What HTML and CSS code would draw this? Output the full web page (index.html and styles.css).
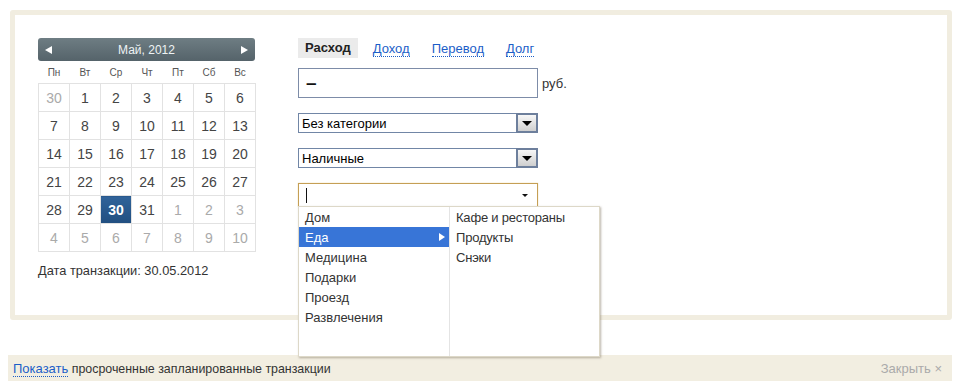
FILE: index.html
```html
<!DOCTYPE html>
<html lang="ru">
<head>
<meta charset="utf-8">
<title>Транзакция</title>
<link rel="stylesheet" href="styles.css">
</head>
<body>
<div class="panel">
  <div class="cal-col">
    <div class="cal-head">
      <svg class="cal-arrow" width="7" height="8" viewBox="0 0 7 8"><polygon points="7,0 7,8 0,4" fill="#fff"/></svg>
      <span class="cal-title">Май, 2012</span>
      <svg class="cal-arrow" width="7" height="8" viewBox="0 0 7 8"><polygon points="0,0 0,8 7,4" fill="#fff"/></svg>
    </div>
    <table class="cal">
      <thead>
        <tr><th>Пн</th><th>Вт</th><th>Ср</th><th>Чт</th><th>Пт</th><th>Сб</th><th>Вс</th></tr>
      </thead>
      <tbody>
        <tr><td class="other">30</td><td>1</td><td>2</td><td>3</td><td>4</td><td>5</td><td>6</td></tr>
        <tr><td>7</td><td>8</td><td>9</td><td>10</td><td>11</td><td>12</td><td>13</td></tr>
        <tr><td>14</td><td>15</td><td>16</td><td>17</td><td>18</td><td>19</td><td>20</td></tr>
        <tr><td>21</td><td>22</td><td>23</td><td>24</td><td>25</td><td>26</td><td>27</td></tr>
        <tr><td>28</td><td>29</td><td class="sel">30</td><td>31</td><td class="other">1</td><td class="other">2</td><td class="other">3</td></tr>
        <tr><td class="other">4</td><td class="other">5</td><td class="other">6</td><td class="other">7</td><td class="other">8</td><td class="other">9</td><td class="other">10</td></tr>
      </tbody>
    </table>
    <div class="cal-date">Дата транзакции: 30.05.2012</div>
  </div>

  <div class="form-col">
    <div class="tabs">
      <span class="tab active">Расход</span>
      <a class="tab link first">Доход</a>
      <a class="tab link">Перевод</a>
      <a class="tab link">Долг</a>
    </div>
    <div class="amount-row">
      <div class="amount"><span class="dash">–</span></div>
      <span class="currency">руб.</span>
    </div>
    <div class="select">
      <span class="select-text">Без категории</span>
      <span class="select-btn"><span class="tri"></span></span>
    </div>
    <div class="select">
      <span class="select-text">Наличные</span>
      <span class="select-btn"><span class="tri"></span></span>
    </div>
    <div class="combo-wrap">
      <div class="combo">
        <span class="caret"></span>
        <span class="combo-tri"></span>
      </div>
      <div class="dropdown">
        <ul class="menu">
          <li>Дом</li>
          <li class="hl">Еда<span class="sub-arrow"></span></li>
          <li>Медицина</li>
          <li>Подарки</li>
          <li>Проезд</li>
          <li>Развлечения</li>
        </ul>
        <ul class="menu sub">
          <li>Кафе и рестораны</li>
          <li>Продукты</li>
          <li>Снэки</li>
        </ul>
      </div>
    </div>
  </div>
</div>

<div class="bar">
  <div class="bar-left"><a class="bar-link">Показать</a><span class="bar-rest"> просроченные запланированные транзакции</span></div>
  <div class="bar-close">Закрыть ×</div>
</div>
</body>
</html>
```

FILE: styles.css
```css
html, body {
  background: #fff;
}
body {
  margin: 8px;
  font-family: "Liberation Sans", Arial, sans-serif;
  font-size: 13px;
  color: #333;
}

.panel {
  box-sizing: border-box;
  margin: 2px 0 0 2px;
  height: 310px;
  border: 5px solid #f1ede0;
  border-radius: 3px;
  padding: 23px 0 0 23px;
  display: flex;
  align-items: flex-start;
}

/* calendar */
.cal-col {
  width: 218px;
  flex: none;
}
.cal-head {
  height: 23px;
  border-radius: 3px;
  background: linear-gradient(#6e7d83, #55636a);
  display: flex;
  align-items: center;
  justify-content: space-between;
  padding: 0 7px 0 7px;
  box-sizing: border-box;
  width: 217px;
}
.cal-title {
  color: #eef3f4;
  font-size: 12px;
}
.cal-arrow {
  display: block;
}
.cal {
  border-collapse: collapse;
  margin: 0;
}
.cal th {
  height: 22px;
  padding: 0;
  font-size: 10px;
  font-weight: normal;
  color: #555;
  text-align: center;
  vertical-align: middle;
}
.cal td {
  width: 30px;
  height: 27px;
  padding: 0;
  border: 1px solid #e2e2e2;
  text-align: center;
  vertical-align: middle;
  font-size: 14px;
  color: #444;
}
.cal td.other {
  color: #aaa;
}
.cal td.sel {
  background: linear-gradient(#30639a, #214f80);
  color: #fff;
  font-weight: bold;
}
.cal-date {
  margin-top: 11px;
  font-size: 12.8px;
  color: #333;
}

/* form */
.form-col {
  margin-left: 42px;
  width: 280px;
  flex: none;
}
.tabs {
  display: flex;
  align-items: center;
  height: 20px;
}
.tab {
  font-size: 13px;
}
.tab.active {
  background: #ebebeb;
  font-weight: bold;
  color: #222;
  padding: 0 7px;
  line-height: 20px;
  height: 20px;
}
.tab.link {
  color: #1c5ec8;
  border-bottom: 1px dotted #1c5ec8;
  line-height: 14px;
  margin-top: 2px;
  margin-left: 22px;
  cursor: pointer;
}
.tab.link.first {
  margin-left: 15px;
}

.amount-row {
  display: flex;
  align-items: center;
  margin-top: 10px;
}
.amount {
  box-sizing: border-box;
  width: 240px;
  height: 30px;
  border: 1px solid #7d8ca8;
  display: flex;
  align-items: center;
  padding-left: 7px;
}
.dash {
  font-weight: bold;
  font-size: 19px;
  color: #111;
}
.currency {
  margin-left: 4px;
  font-size: 13px;
  color: #333;
}

.select {
  box-sizing: border-box;
  width: 240px;
  height: 20px;
  border: 1px solid #7186a6;
  margin-top: 15px;
  display: flex;
  align-items: center;
  padding-left: 3px;
  background: #fff;
}
.select-text {
  flex: 1;
  font-size: 13px;
  color: #000;
}
.select-btn {
  box-sizing: border-box;
  width: 22px;
  height: 20px;
  margin: -1px -1px -1px 0;
  border: 2px solid #6d7f9c;
  background: linear-gradient(#f7f7f7, #cfcfcf);
  display: flex;
  align-items: center;
  justify-content: center;
}
.tri {
  width: 0;
  height: 0;
  border-left: 5px solid transparent;
  border-right: 5px solid transparent;
  border-top: 5px solid #000;
}

.combo-wrap {
  position: relative;
  margin-top: 15px;
}
.combo {
  box-sizing: border-box;
  width: 240px;
  height: 24px;
  border: 1px solid #c59f55;
  box-shadow: 0 0 1px #e8cf8f;
  display: flex;
  align-items: center;
  justify-content: space-between;
  padding: 0 9px 0 7px;
}
.caret {
  width: 1px;
  height: 15px;
  background: #111;
}
.combo-tri {
  width: 0;
  height: 0;
  border-left: 3px solid transparent;
  border-right: 3px solid transparent;
  border-top: 3px solid #111;
}

.dropdown {
  position: absolute;
  left: 0;
  top: 23px;
  box-sizing: border-box;
  width: 302px;
  height: 151px;
  background: #fff;
  border: 1px solid #ddd8c8;
  box-shadow: 1px 1px 2px rgba(120, 110, 90, 0.5);
  display: flex;
  z-index: 5;
}
.menu {
  list-style: none;
  margin: 0;
  padding: 0;
  width: 150px;
  flex: none;
}
.menu.sub {
  border-left: 1px solid #e4e4e4;
  width: auto;
  flex: 1;
}
.menu li {
  height: 20px;
  line-height: 21px;
  padding-left: 6px;
  font-size: 13px;
  color: #333;
  position: relative;
}
.menu.sub li {
  padding-left: 6px;
  letter-spacing: -0.2px;
}
.menu li.hl {
  background: #3875d7;
  color: #fff;
}
.sub-arrow {
  position: absolute;
  right: 4px;
  top: 6px;
  width: 0;
  height: 0;
  border-top: 4px solid transparent;
  border-bottom: 4px solid transparent;
  border-left: 6px solid #fff;
}

/* bottom bar */
.bar {
  margin-top: 35px;
  height: 26px;
  background: #f2eee1;
  display: flex;
  align-items: center;
  justify-content: space-between;
  padding: 0 10px 0 5px;
  font-size: 13px;
}
.bar-left {
  color: #333;
}
.bar-rest {
  font-size: 12.4px;
}
.bar-link {
  color: #1c5ec8;
  border-bottom: 1px dotted #1c5ec8;
  cursor: pointer;
}
.bar-close {
  color: #aaa;
}
```
